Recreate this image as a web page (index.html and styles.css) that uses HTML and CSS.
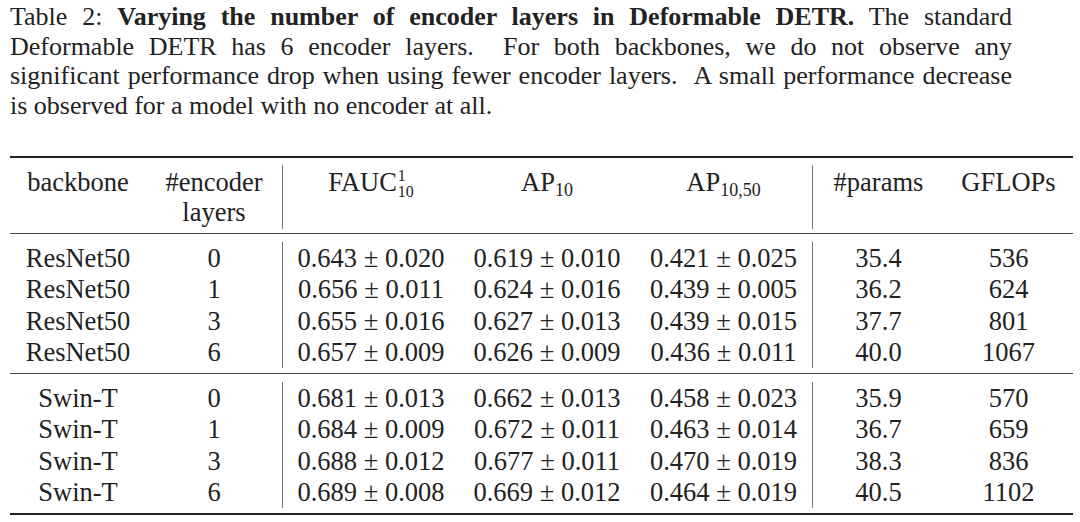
FILE: index.html
```html
<!DOCTYPE html>
<html>
<head>
<meta charset="utf-8">
<link rel="stylesheet" href="styles.css">
</head>
<body>
<div class="page">
  <div class="caption">
    <span class="cline">Table 2: <b>Varying the number of encoder layers in Deformable DETR.</b> The standard</span>
    <span class="cline">Deformable DETR has 6 encoder layers. &nbsp;For both backbones, we do not observe any</span>
    <span class="cline">significant performance drop when using fewer encoder layers. &nbsp;A small performance decrease</span>
    <span class="cline last">is observed for a model with no encoder at all.</span>
  </div>

  <div class="table">
    <div class="rule thick"></div>
    <div class="group head">
      <div class="cell">backbone</div>
      <div class="cell">#encoder<br>layers</div>
      <div class="cell vl">FAUC<span class="supsub"><span>1</span><span>10</span></span></div>
      <div class="cell">AP<sub>10</sub></div>
      <div class="cell">AP<sub>10,50</sub></div>
      <div class="cell vl">#params</div>
      <div class="cell">GFLOPs</div>
    </div>
    <div class="rule thin"></div>
    <div class="group body">
      <div class="cell">ResNet50</div><div class="cell">0</div><div class="cell vl">0.643 ± 0.020</div><div class="cell">0.619 ± 0.010</div><div class="cell">0.421 ± 0.025</div><div class="cell vl">35.4</div><div class="cell">536</div>
      <div class="cell">ResNet50</div><div class="cell">1</div><div class="cell vl">0.656 ± 0.011</div><div class="cell">0.624 ± 0.016</div><div class="cell">0.439 ± 0.005</div><div class="cell vl">36.2</div><div class="cell">624</div>
      <div class="cell">ResNet50</div><div class="cell">3</div><div class="cell vl">0.655 ± 0.016</div><div class="cell">0.627 ± 0.013</div><div class="cell">0.439 ± 0.015</div><div class="cell vl">37.7</div><div class="cell">801</div>
      <div class="cell">ResNet50</div><div class="cell">6</div><div class="cell vl">0.657 ± 0.009</div><div class="cell">0.626 ± 0.009</div><div class="cell">0.436 ± 0.011</div><div class="cell vl">40.0</div><div class="cell">1067</div>
    </div>
    <div class="rule thin"></div>
    <div class="group body">
      <div class="cell">Swin-T</div><div class="cell">0</div><div class="cell vl">0.681 ± 0.013</div><div class="cell">0.662 ± 0.013</div><div class="cell">0.458 ± 0.023</div><div class="cell vl">35.9</div><div class="cell">570</div>
      <div class="cell">Swin-T</div><div class="cell">1</div><div class="cell vl">0.684 ± 0.009</div><div class="cell">0.672 ± 0.011</div><div class="cell">0.463 ± 0.014</div><div class="cell vl">36.7</div><div class="cell">659</div>
      <div class="cell">Swin-T</div><div class="cell">3</div><div class="cell vl">0.688 ± 0.012</div><div class="cell">0.677 ± 0.011</div><div class="cell">0.470 ± 0.019</div><div class="cell vl">38.3</div><div class="cell">836</div>
      <div class="cell">Swin-T</div><div class="cell">6</div><div class="cell vl">0.689 ± 0.008</div><div class="cell">0.669 ± 0.012</div><div class="cell">0.464 ± 0.019</div><div class="cell vl">40.5</div><div class="cell">1102</div>
    </div>
    <div class="rule thick"></div>
  </div>
</div>
</body>
</html>
```

FILE: styles.css
```css
html, body {
  margin: 0;
  padding: 0;
  background: #ffffff;
}

body {
  font-family: "Liberation Serif", "Times New Roman", serif;
  color: #222222;
  font-size: 26px;
}

.page {
  padding: 2px 0 0 10px;
}

.caption {
  width: 1002px;
  line-height: 29.7px;
}

.cline {
  display: block;
  text-align: justify;
  text-align-last: justify;
  white-space: nowrap;
}

.cline.last {
  text-align-last: left;
}

.caption b {
  font-weight: bold;
}

.table {
  width: 1063px;
  margin-top: 35px;
  font-size: 26.5px;
}

.rule {
  background: #222222;
}

.rule.thick {
  height: 2px;
}

.rule.thin {
  height: 1px;
  background: #444444;
}

.group {
  display: grid;
  grid-template-columns: 136px 136px 177px 176px 177px 132px 129px;
}

.group.head {
  margin: 7px 0 4px;
}

.group.body {
  margin: 8px 0 5px;
}

.cell {
  text-align: center;
  white-space: nowrap;
}

.head .cell {
  line-height: 30px;
  padding: 2px 0 2px;
}

.body .cell {
  line-height: 32px;
  height: 31.5px;
}

.cell.vl {
  border-left: 1.5px solid #777777;
}

sub {
  font-size: 18px;
  vertical-align: -5px;
  line-height: 0;
}

.supsub {
  display: inline-flex;
  flex-direction: column;
  font-size: 16px;
  line-height: 16px;
  vertical-align: 10px;
  text-align: left;
  margin-left: 1px;
}
```
